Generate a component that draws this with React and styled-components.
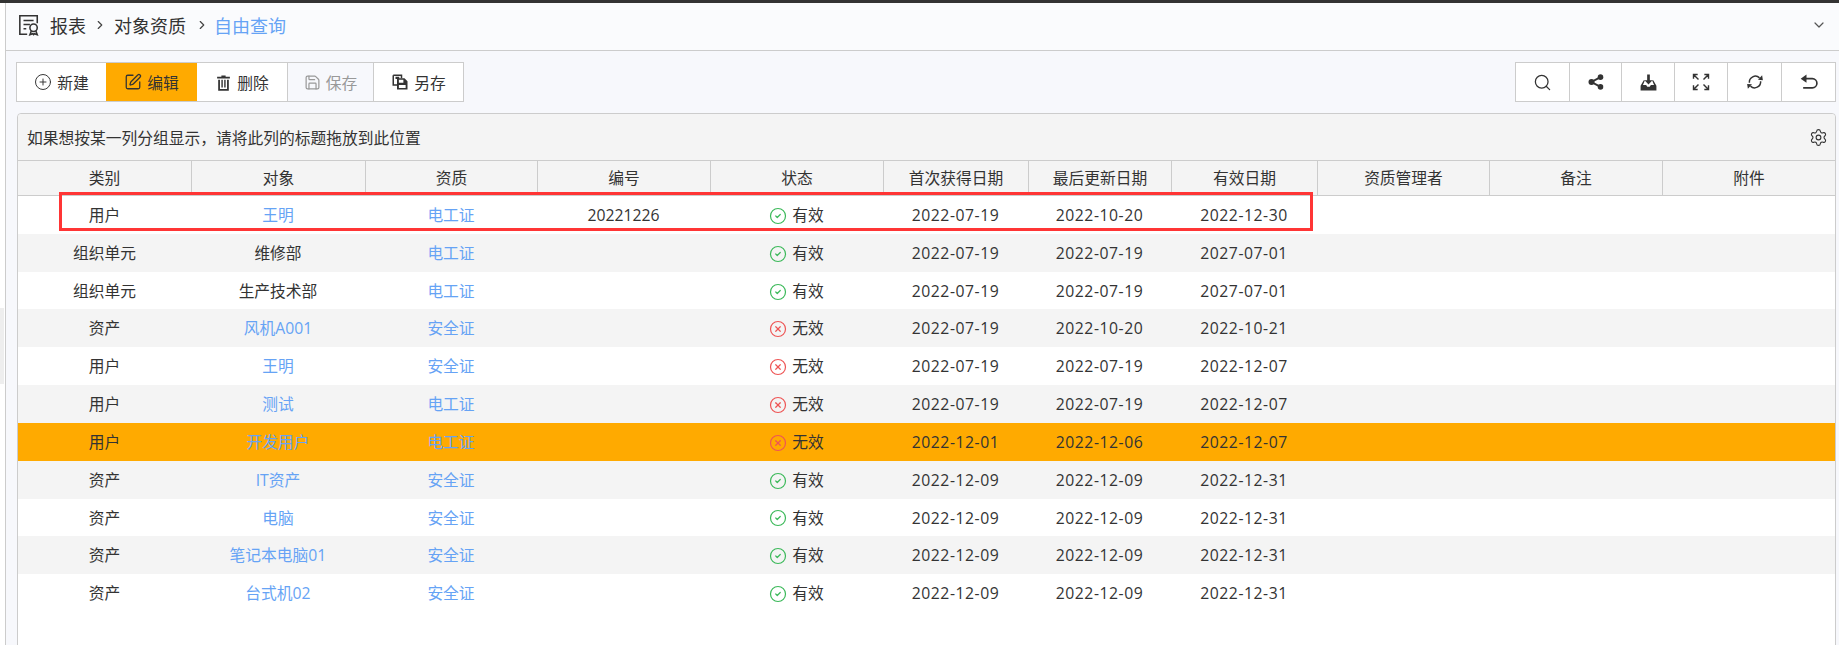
import React from 'react';
import styled, { createGlobalStyle } from 'styled-components';
import {
  ChevronDown,
  ChevronRight,
  CircleCheck,
  CirclePlus,
  CircleX,
  Save,
  Search,
  Settings,
  SquarePen,
} from 'lucide-react';

const GlobalStyle = createGlobalStyle`
  html, body {
    margin: 0;
    padding: 0;
    height: 100%;
    background: #fff;
    overflow: hidden;
  }
  body {
    font-family: "Open Sans", "Noto Sans CJK SC", sans-serif;
    font-size: 15.75px;
    color: #333;
  }
`;

const Page = styled.div`
  position: relative;
  height: 645px;
  display: flex;
  flex-direction: column;
  overflow: hidden;
`;

const TopLine = styled.div`
  height: 3px;
  flex: none;
  background: #333;
`;

const Body = styled.div`
  flex: 1;
  min-height: 0;
  display: flex;
`;

const Strip = styled.div`
  width: 5px;
  flex: none;
  padding-top: 305px;
  box-sizing: border-box;
  .patch {
    width: 4px;
    height: 76px;
    background: #eee;
  }
`;

const Main = styled.div`
  flex: 1;
  min-width: 0;
  display: flex;
  flex-direction: column;
  border-left: 1px solid #ccc;
  background: #f7f8fc;
`;

const TitleBar = styled.div`
  height: 48px;
  flex: none;
  box-sizing: border-box;
  display: flex;
  align-items: center;
  padding: 0 12px 3px;
  background: #fafbfd;
  border-bottom: 1px solid #ccc;
  font-size: 18px;
  .current {
    color: #66a3f5;
  }
  .end {
    margin-left: auto;
    color: #555;
  }
`;

const Sep = styled(ChevronRight)`
  flex: none;
  margin: 0 ${(p) => p.$right}px 0 ${(p) => p.$left}px;
  color: #444;
`;

const TitleIcon = styled.svg`
  width: 22px;
  height: 22px;
  margin-right: 10px;
  fill: none;
  stroke: #333;
  stroke-width: 1.7;
`;

const Toolbars = styled.div`
  flex: none;
  display: flex;
  justify-content: space-between;
  padding: 11px 3px 11px 10px;
`;

const BtnGroup = styled.div`
  display: flex;
  height: 40px;
  box-sizing: border-box;
  border: 1px solid #ccc;
  background: #fff;
`;

const Btn = styled.div`
  width: ${(p) => p.$w}px;
  box-sizing: border-box;
  display: flex;
  align-items: center;
  justify-content: center;
  gap: 5px;
  border-left: ${(p) => (p.$first || p.$active ? 'none' : '1px solid #ccc')};
  background: ${(p) => (p.$active ? '#ffaa00' : p.$disabled ? '#f7f8fc' : '#fff')};
  color: ${(p) => (p.$disabled ? '#999' : '#333')};
  svg {
    flex: none;
  }
`;

const Panel = styled.div`
  flex: 1;
  min-height: 0;
  margin: 0 3px -2px 11px;
  display: flex;
  flex-direction: column;
  background: #fff;
  border: 1px solid #ccc;
  border-radius: 4px 4px 0 0;
`;

const GroupBar = styled.div`
  height: 46px;
  flex: none;
  box-sizing: border-box;
  display: flex;
  align-items: center;
  justify-content: space-between;
  padding: 0 7px 0 9px;
  background: #f4f4f4;
  border-radius: 4px 4px 0 0;
`;

const Row = styled.div`
  display: grid;
  grid-template-columns: 173px 174px 172px 173px 173px 145px 143px 146px 172px 173px 1fr;
  text-align: center;
`;

const HeadRow = styled(Row)`
  height: 36px;
  box-sizing: border-box;
  background: #f4f4f4;
  border-top: 1px solid #ccc;
  border-bottom: 1px solid #ccc;
`;

const HeadCell = styled.div`
  line-height: 35px;
  box-sizing: border-box;
  border-left: ${(p) => (p.$first ? 'none' : '1px solid #ccc')};
`;

const DataRow = styled(Row)`
  height: 37.82px;
  line-height: 37.82px;
  background: ${(p) => (p.$selected ? '#ffaa00' : p.$odd ? '#f4f4f4' : '#fff')};
`;

const Cell = styled.div`
  padding-top: 1px;
  white-space: nowrap;
  color: ${(p) => (p.$link ? '#66a3f5' : '#333')};
  letter-spacing: ${(p) => (p.$date ? '0.55px' : '0')};
`;

const Status = styled.div`
  padding-top: 1px;
  display: flex;
  align-items: center;
  justify-content: center;
  gap: 5px;
  svg {
    flex: none;
    color: ${(p) => (p.$ok ? '#3cb95a' : '#ee5555')};
  }
`;

const Annotation = styled.div`
  position: absolute;
  left: 59px;
  top: 192px;
  width: 1254px;
  height: 39px;
  box-sizing: border-box;
  border: 3px solid #ff3535;
  pointer-events: none;
`;

const Glyph = styled.svg`
  width: ${(p) => p.$size || 18}px;
  height: ${(p) => p.$size || 18}px;
  color: #333;
`;

const TrashIcon = () => (
  <Glyph viewBox="0 0 24 24" $size={17}>
    <path fill="currentColor" d="M9 2h6v2h6v2.4H3V4h6zM4.500 8H7v13h10V8h2.500v15.500h-15zM9 8h2v11H9zM13 8h2v11h-2z" />
  </Glyph>
);

const SaveAsIcon = () => (
  <Glyph viewBox="0 0 24 24">
    <path fill="none" stroke="currentColor" strokeWidth="2" d="M3 3h11v4M3 3v13h5" />
    <path fill="currentColor" d="M6 5h5v3H6z" />
    <path fill="currentColor" d="M8 7h10l4 4v11H8zm2.500 2v4h6V9zm0 7v4h9v-4z" />
  </Glyph>
);

const ShareIcon = () => (
  <Glyph viewBox="0 0 24 24">
    <path fill="none" stroke="currentColor" strokeWidth="2.600" d="M18 5.500 6 12l12 6.500" />
    <circle cx="6" cy="12" r="4" fill="currentColor" />
    <circle cx="18" cy="5.500" r="3.700" fill="currentColor" />
    <circle cx="18" cy="18.500" r="3.700" fill="currentColor" />
  </Glyph>
);

const InboxIcon = () => (
  <Glyph viewBox="0 0 24 24" $size={19}>
    <path fill="currentColor" d="M10.300 2h3.400v7H17l-5 5.500L7 9h3.300z" />
    <path fill="currentColor" d="M6 9h1.500L5 15h4l1.500 2.500h3L15 15h4l-2.500-6H18l4 7v6H2v-6z" />
  </Glyph>
);

const ExpandIcon = () => (
  <Glyph viewBox="0 0 24 24" $size={20}>
    <g fill="none" stroke="currentColor" strokeWidth="1.700">
      <path d="M3 8V3h5M3 3l6 6M21 8V3h-5M21 3l-6 6M3 16v5h5M3 21l6-6M21 16v5h-5M21 21l-6-6" />
    </g>
  </Glyph>
);

const RefreshIcon = () => (
  <Glyph viewBox="0 0 24 24">
    <path fill="none" stroke="currentColor" strokeWidth="2" d="M4.500 13a8 8 0 0 1 13.500-6.500M19.500 11a8 8 0 0 1-13.500 6.500" />
    <path fill="currentColor" d="m16 9 6.500.5-1-6.500zM8 15l-6.500-.5 1 6.500z" />
  </Glyph>
);

const UndoIcon = () => (
  <Glyph viewBox="0 0 24 24" $size={20}>
    <path fill="none" stroke="currentColor" strokeWidth="2" d="M7 8h9a5 5 0 0 1 0 11H5" />
    <path fill="currentColor" d="M9 3v10L2 8z" />
  </Glyph>
);

const columns = ['类别', '对象', '资质', '编号', '状态', '首次获得日期', '最后更新日期', '有效日期', '资质管理者', '备注', '附件'];

// [类别, 对象, 对象是否链接, 资质, 编号, 有效, 首次, 更新, 有效期]
const rows = [
  ['用户', '王明', true, '电工证', '20221226', true, '2022-07-19', '2022-10-20', '2022-12-30'],
  ['组织单元', '维修部', false, '电工证', '', true, '2022-07-19', '2022-07-19', '2027-07-01'],
  ['组织单元', '生产技术部', false, '电工证', '', true, '2022-07-19', '2022-07-19', '2027-07-01'],
  ['资产', '风机A001', true, '安全证', '', false, '2022-07-19', '2022-10-20', '2022-10-21'],
  ['用户', '王明', true, '安全证', '', false, '2022-07-19', '2022-07-19', '2022-12-07'],
  ['用户', '测试', true, '电工证', '', false, '2022-07-19', '2022-07-19', '2022-12-07'],
  ['用户', '开发用户', true, '电工证', '', false, '2022-12-01', '2022-12-06', '2022-12-07'],
  ['资产', 'IT资产', true, '安全证', '', true, '2022-12-09', '2022-12-09', '2022-12-31'],
  ['资产', '电脑', true, '安全证', '', true, '2022-12-09', '2022-12-09', '2022-12-31'],
  ['资产', '笔记本电脑01', true, '安全证', '', true, '2022-12-09', '2022-12-09', '2022-12-31'],
  ['资产', '台式机02', true, '安全证', '', true, '2022-12-09', '2022-12-09', '2022-12-31'],
];

const App = () => (
  <>
    <GlobalStyle />
    <Page>
      <TopLine />
      <Body>
        <Strip>
          <div className="patch" />
        </Strip>
        <Main>
          <TitleBar>
            <TitleIcon viewBox="0 0 24 24">
              <path d="M21 10V2H2v20h8" />
              <path d="M6 7h11M6 11.500h7M6 16h3" />
              <circle cx="17" cy="15" r="4" />
              <path d="m14.500 18.500-1.500 4 3-1 1 1 1-1 3 1-1.500-4" />
            </TitleIcon>
            <span>报表</span>
            <Sep size={14} strokeWidth={2} $left={7} $right={7} />
            <span>对象资质</span>
            <Sep size={14} strokeWidth={2} $left={9} $right={5} />
            <span className="current">自由查询</span>
            <ChevronDown className="end" size={16} strokeWidth={1.8} />
          </TitleBar>

          <Toolbars>
            <BtnGroup>
              <Btn $w={89} $first>
                <CirclePlus size={18} strokeWidth={1.3} />
                新建
              </Btn>
              <Btn $w={91} $active>
                <SquarePen size={18} strokeWidth={1.7} />
                编辑
              </Btn>
              <Btn $w={90} $first>
                <TrashIcon />
                删除
              </Btn>
              <Btn $w={86} $disabled>
                <Save size={17} strokeWidth={1.7} />
                保存
              </Btn>
              <Btn $w={90}>
                <SaveAsIcon />
                另存
              </Btn>
            </BtnGroup>
            <BtnGroup>
              <Btn $w={53} $first>
                <Search size={19} strokeWidth={1.6} />
              </Btn>
              <Btn $w={52}>
                <ShareIcon />
              </Btn>
              <Btn $w={53}>
                <InboxIcon />
              </Btn>
              <Btn $w={53}>
                <ExpandIcon />
              </Btn>
              <Btn $w={54}>
                <RefreshIcon />
              </Btn>
              <Btn $w={54}>
                <UndoIcon />
              </Btn>
            </BtnGroup>
          </Toolbars>

          <Panel>
            <GroupBar>
              <span>如果想按某一列分组显示，请将此列的标题拖放到此位置</span>
              <Settings size={19} strokeWidth={1.4} />
            </GroupBar>
            <HeadRow>
              {columns.map((c, i) => (
                <HeadCell key={c} $first={i === 0}>
                  {c}
                </HeadCell>
              ))}
            </HeadRow>
            {rows.map((r, i) => (
              <DataRow key={i} $odd={i % 2 === 1} $selected={i === 6}>
                <Cell>{r[0]}</Cell>
                <Cell $link={r[2]}>{r[1]}</Cell>
                <Cell $link>{r[3]}</Cell>
                <Cell>{r[4]}</Cell>
                <Status $ok={r[5]}>
                  {r[5] ? <CircleCheck size={18} strokeWidth={1.6} /> : <CircleX size={18} strokeWidth={1.6} />}
                  {r[5] ? '有效' : '无效'}
                </Status>
                <Cell $date>{r[6]}</Cell>
                <Cell $date>{r[7]}</Cell>
                <Cell $date>{r[8]}</Cell>
              </DataRow>
            ))}
          </Panel>
        </Main>
      </Body>
      <Annotation />
    </Page>
  </>
);

export default App;
